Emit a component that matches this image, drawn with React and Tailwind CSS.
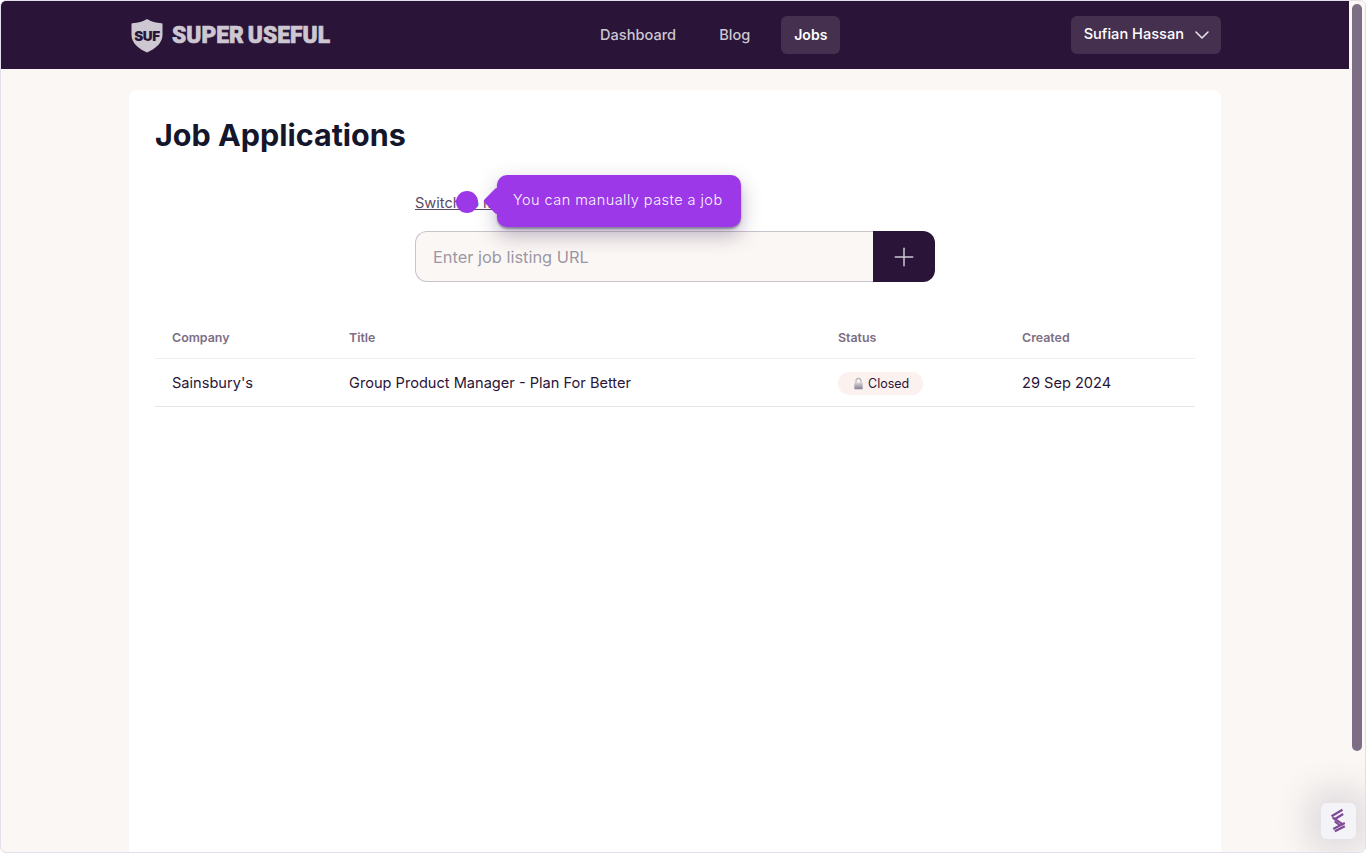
import React from "react";
import { ChevronDown, Plus } from "lucide-react";

function Shield() {
  return (
    <svg width="32" height="35" viewBox="0 0 32 35" className="shrink-0">
      <path d="M16 1 C20 3.5 25 5 30.5 5.2 C31.2 5.2 31.5 5.6 31.5 6.2 L31.5 17 C31.5 25 24 31 16 34.5 C8 31 .5 25 .5 17 L.5 6.2 C.5 5.6 .8 5.2 1.5 5.2 C7 5 12 3.5 16 1 Z" fill="#cdc7d2" />
      <text x="16" y="22.5" textAnchor="middle" fontFamily="Inter, sans-serif" fontWeight="900" fontSize="13.5" fill="#2a1438" letterSpacing="-0.3">SUF</text>
    </svg>
  );
}

function Lock() {
  return (
    <svg width="11" height="13" viewBox="0 0 11 13" className="shrink-0">
      <defs>
        <linearGradient id="lockBody" x1="0" y1="0" x2="0" y2="1">
          <stop offset="0" stopColor="#d8d5da" />
          <stop offset="1" stopColor="#86808e" />
        </linearGradient>
      </defs>
      <path d="M3 6 V3.8 C3 2.3 4.1 1.3 5.5 1.3 C6.9 1.3 8 2.3 8 3.8 V6" fill="none" stroke="#b5b2b8" strokeWidth="1.2" />
      <rect x="1.3" y="5.6" width="8.4" height="6.6" rx="0.8" fill="url(#lockBody)" />
    </svg>
  );
}

function Badge() {
  return (
    <svg width="22" height="26" viewBox="0 0 22 26" fill="none" stroke="#7f4a96" strokeWidth="2.2" strokeLinecap="butt">
      <path d="M3.5 8.3 L14.5 1.7" />
      <path d="M5.8 11.7 L15.2 6" />
      <path d="M4.5 9.3 L15.2 16.7" />
      <path d="M6.8 13.3 L11.5 17" />
      <path d="M5.2 21 L16.8 15" />
      <path d="M6.8 23.3 L16.8 18.3" />
    </svg>
  );
}

export default function App() {
  const ui = { fontFamily: "Inter, sans-serif" };
  return (
    <div className="relative flex h-[853px] w-[1366px] overflow-hidden rounded-[6px] border border-[#e4deea] bg-[#fbf7f4] text-[#2a1438]" style={ui}>
      <div className="flex min-w-0 flex-1 flex-col">
        <header className="flex h-[68px] shrink-0 bg-[#2a1438] pl-[128px] pr-[128px]">
          <div className="grid w-full grid-cols-[458px_1fr_auto] items-center">
            <div className="flex items-center gap-[9px] pl-[2px] text-[#cdc7d2]">
              <Shield />
              <span className="inline-block origin-left scale-x-[0.945] text-[24px] font-black leading-none tracking-[0.1px] [-webkit-text-stroke:0.7px_#cdc7d2] [word-spacing:-2px]" style={{ fontFamily: "Roboto, sans-serif" }}>SUPER USEFUL</span>
            </div>
            <nav className="flex items-center gap-[17px] text-[14.6px] font-medium text-[#cdc7d2]">
              <a className="rounded-[6px] px-[13px] py-[10px] leading-[18px]">Dashboard</a>
              <a className="rounded-[6px] px-[13px] py-[10px] leading-[18px]">Blog</a>
              <a className="ml-[1px] rounded-[6px] bg-[#453050] px-[13px] py-[10px] text-[14px] font-semibold leading-[18px] text-white">Jobs</a>
            </nav>
            <div className="flex justify-end">
              <button className="flex h-[38px] items-center gap-[6px] rounded-[6px] bg-[#453050] pl-[13px] pr-[7px] text-[14.6px] font-medium text-white">
                Sufian Hassan
                <ChevronDown size={24} strokeWidth={1.6} className="text-[#e6e2e9]" />
              </button>
            </div>
          </div>
        </header>

        <main className="flex-1 px-[128px] pt-[21px]">
          <div className="h-full rounded-t-[8px] bg-white px-[26px]">
            <h1 className="pt-[26px] text-[30.5px] font-bold leading-[38px] text-[#14162b]">Job Applications</h1>

            <div className="relative mx-auto mt-[38px] w-[520px]">
              <a className="block text-[14.6px] leading-[22px] text-[#5b4a66] underline">Switch to manual entry</a>
              <div className="mt-[17px] flex h-[51px]">
                <input
                  readOnly
                  placeholder="Enter job listing URL"
                  className="min-w-0 flex-1 rounded-l-[12px] border border-r-0 border-[#c9c3cc] bg-[#fbf7f4] px-[17px] pt-[2px] text-[16.4px] outline-none placeholder:text-[#9c97a6]"
                />
                <button className="flex w-[62px] items-center justify-center rounded-r-[12px] bg-[#2a1438] text-[#cdc7d2]">
                  <Plus size={30} strokeWidth={1.2} />
                </button>
              </div>

              <span className="absolute left-[41px] top-[-1px] h-[22px] w-[22px] rounded-full bg-[#9c38e8]" />
              <div className="absolute left-[82px] top-[-17px] flex h-[52px] w-[244px] items-center rounded-[10px] bg-[#9c38e8] pb-[2px] pl-[16px] text-[14.5px] font-light tracking-[0.45px] text-[#fbf6ff] shadow-[0_2px_2px_rgba(60,40,90,0.45),0_8px_20px_rgba(60,40,90,0.35)]">
                <span className="absolute left-[-10px] top-[16px] h-[20px] w-[20px] rotate-45 rounded-[3px] bg-[#9c38e8]" />
                <span className="relative">You can manually paste a job</span>
              </div>
            </div>

            <div className="mt-[39px] text-[14.6px]">
              <div className="grid h-[38px] grid-cols-[177px_489px_184px_1fr] items-center border-b border-[#f4efec] pb-[3px] pl-[17px] text-[12.4px] font-semibold text-[#7d6e85]">
                <div>Company</div>
                <div>Title</div>
                <div>Status</div>
                <div>Created</div>
              </div>
              <div className="grid h-[48px] grid-cols-[177px_489px_184px_1fr] items-center border-b border-[#e8e6e8] pl-[17px] pt-[2px]">
                <div>Sainsbury's</div>
                <div>Group Product Manager - Plan For Better</div>
                <div className="flex">
                  <span className="inline-flex h-[23px] w-[85px] items-center gap-[4px] rounded-full bg-[#fbf1ef] pl-[15px] text-[12.5px] font-normal">
                    <Lock />
                    <span className="pt-[1px]">Closed</span>
                  </span>
                </div>
                <div>29 Sep 2024</div>
              </div>
            </div>
          </div>
        </main>
      </div>

      <div className="w-[16px] shrink-0 bg-[#fbf7f4] px-[3px] pt-[3px]">
        <div className="h-[747px] w-[10px] rounded-full bg-[#7d6e85]" />
      </div>

      <div className="absolute bottom-[13px] right-[9px] flex h-[36px] w-[35px] items-center justify-center rounded-[6px] bg-[#f4f3f7] shadow-[0_0_32px_14px_rgba(90,80,110,0.16)]">
        <Badge />
      </div>
    </div>
  );
}
